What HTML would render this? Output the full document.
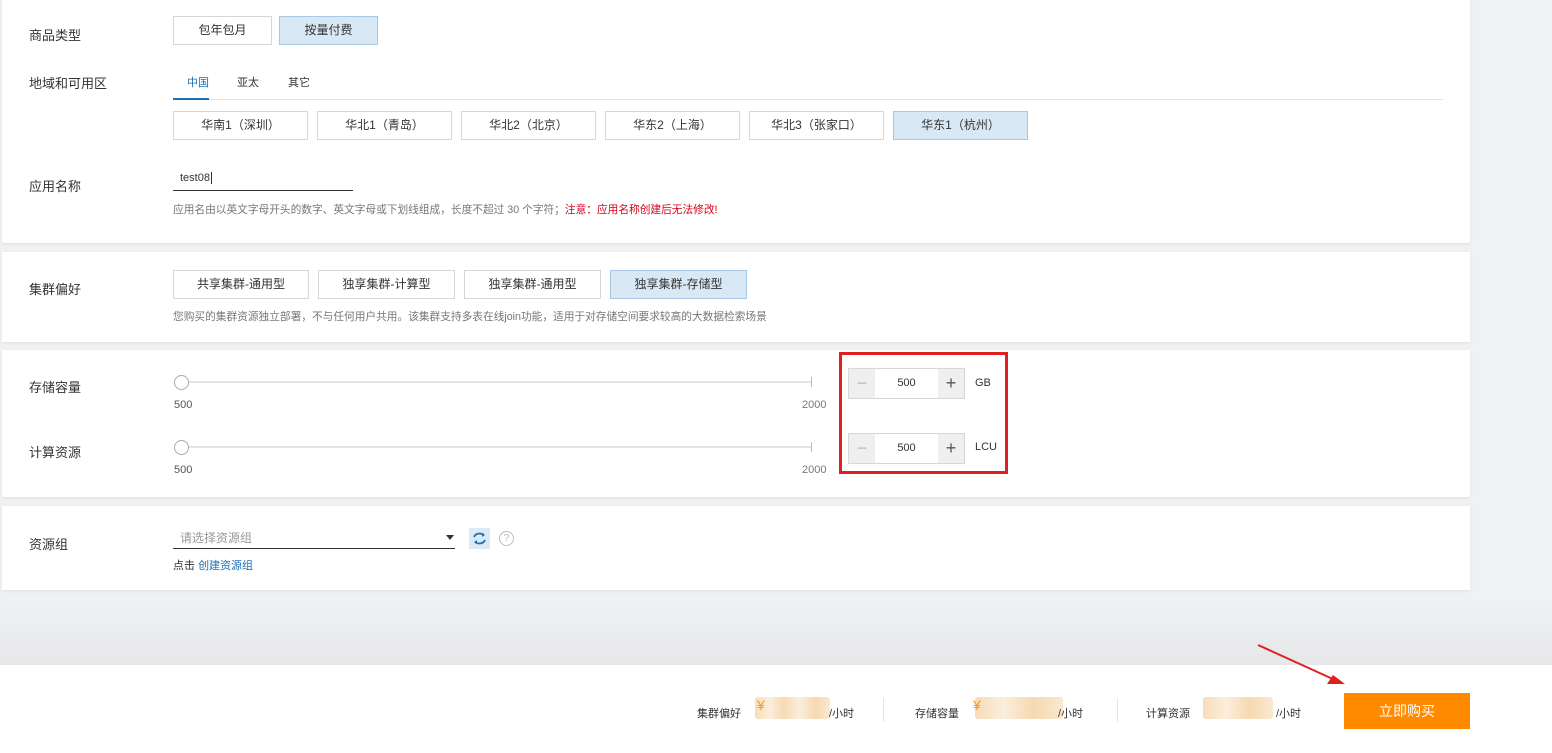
<!DOCTYPE html>
<html><head><meta charset="utf-8"><style>
*{margin:0;padding:0;box-sizing:border-box}
body{width:1552px;height:753px;background:#f0f1f3;font-family:"Liberation Sans","Noto Sans CJK SC",sans-serif;font-size:12px;color:#333;position:relative;overflow:hidden}
.a{position:absolute}
.p{position:absolute;left:2px;width:1468px;background:#fff;box-shadow:0 1px 3px rgba(0,0,0,.08)}
.lbl{position:absolute;left:29px;font-size:13px;color:#333}
.btn{position:absolute;height:29px;border:1px solid #d7d7d7;background:#fff;text-align:center;line-height:27px;font-size:12px;color:#333}
.sel{background:#d9e8f5;border-color:#a8c8e4}
.hint{position:absolute;left:173px;font-size:10.7px;color:#777}
.num{position:absolute;left:848px;width:117px;height:31px;border:1px solid #d7d7d7;background:#fff}
.num .m,.num .pl{position:absolute;top:0;width:26px;height:29px;background:#efefef;text-align:center;line-height:28px;font-size:18px;color:#bbb}
.num .pl{right:0;color:#555}
.num .v{position:absolute;left:26px;right:26px;text-align:center;line-height:29px;font-size:11px}
.blur{position:absolute;height:22px;background:linear-gradient(90deg,#f7dcb8,#fbeedd,#f5d9b0,#fbe8d2);border-radius:3px}
</style></head><body>
<div class="p" style="top:-5px;height:248px"></div>
<div class="p" style="top:252px;height:90px"></div>
<div class="p" style="top:350px;height:147px"></div>
<div class="p" style="top:506px;height:84px"></div>
<div class="a" style="left:0;top:600px;width:1552px;height:65px;background:linear-gradient(#f0f1f3,#e6e7e9)"></div>
<div class="a" style="left:0;top:665px;width:1552px;height:88px;background:#fff"></div>

<div class="lbl" style="top:25px">商品类型</div>
<div class="btn" style="left:173px;top:16px;width:99px">包年包月</div>
<div class="btn sel" style="left:279px;top:16px;width:99px">按量付费</div>

<div class="lbl" style="top:73px">地域和可用区</div>
<div class="a" style="left:187px;top:74px;font-size:11px;color:#1f6fb5">中国</div>
<div class="a" style="left:237px;top:74px;font-size:11px">亚太</div>
<div class="a" style="left:288px;top:74px;font-size:11px">其它</div>
<div class="a" style="left:173px;top:99px;width:1270px;height:1px;background:#e5e5e5"></div>
<div class="a" style="left:173px;top:98px;width:36px;height:2px;background:#1f6fb5"></div>
<div class="btn" style="left:173px;top:111px;width:135px">华南1（深圳）</div>
<div class="btn" style="left:317px;top:111px;width:135px">华北1（青岛）</div>
<div class="btn" style="left:461px;top:111px;width:135px">华北2（北京）</div>
<div class="btn" style="left:605px;top:111px;width:135px">华东2（上海）</div>
<div class="btn" style="left:749px;top:111px;width:135px">华北3（张家口）</div>
<div class="btn sel" style="left:893px;top:111px;width:135px">华东1（杭州）</div>

<div class="lbl" style="top:176px">应用名称</div>
<div class="a" style="left:180px;top:172px;font-size:11px">test08<span style="border-left:1px solid #333;margin-left:1px"></span></div>
<div class="a" style="left:173px;top:190px;width:180px;height:1px;background:#333"></div>
<div class="hint" style="top:202px">应用名由以英文字母开头的数字、英文字母或下划线组成，长度不超过 30 个字符；<span style="color:#d9001b">注意：应用名称创建后无法修改!</span></div>

<div class="lbl" style="top:279px">集群偏好</div>
<div class="btn" style="left:173px;top:270px;width:136px">共享集群-通用型</div>
<div class="btn" style="left:318px;top:270px;width:137px">独享集群-计算型</div>
<div class="btn" style="left:464px;top:270px;width:137px">独享集群-通用型</div>
<div class="btn sel" style="left:610px;top:270px;width:137px">独享集群-存储型</div>
<div class="hint" style="top:309px">您购买的集群资源独立部署，不与任何用户共用。该集群支持多表在线join功能，适用于对存储空间要求较高的大数据检索场景</div>

<div class="lbl" style="top:377px">存储容量</div>
<div class="a" style="left:181px;top:381px;width:631px;height:2px;background:#e3e3e3"></div>
<div class="a" style="left:811px;top:377px;width:1px;height:10px;background:#bbb"></div>
<div class="a" style="left:174px;top:375px;width:15px;height:15px;border-radius:50%;border:1px solid #aaa;background:#fff"></div>
<div class="a" style="left:174px;top:399px;font-size:11px;color:#555">500</div>
<div class="a" style="left:802px;top:399px;font-size:11px;color:#777">2000</div>
<div class="num" style="top:368px"><div class="m">−</div><div class="v">500</div><div class="pl">+</div></div>
<div class="a" style="left:975px;top:377px;font-size:11px">GB</div>

<div class="lbl" style="top:442px">计算资源</div>
<div class="a" style="left:181px;top:446px;width:631px;height:2px;background:#e3e3e3"></div>
<div class="a" style="left:811px;top:442px;width:1px;height:10px;background:#bbb"></div>
<div class="a" style="left:174px;top:440px;width:15px;height:15px;border-radius:50%;border:1px solid #aaa;background:#fff"></div>
<div class="a" style="left:174px;top:464px;font-size:11px;color:#555">500</div>
<div class="a" style="left:802px;top:464px;font-size:11px;color:#777">2000</div>
<div class="num" style="top:433px"><div class="m">−</div><div class="v">500</div><div class="pl">+</div></div>
<div class="a" style="left:975px;top:441px;font-size:11px">LCU</div>
<div class="a" style="left:839px;top:352px;width:169px;height:122px;border:3px solid #e02020"></div>

<div class="lbl" style="top:534px">资源组</div>
<div class="a" style="left:180px;top:529px;font-size:12px;color:#999">请选择资源组</div>
<div class="a" style="left:446px;top:535px;width:0;height:0;border-left:4px solid transparent;border-right:4px solid transparent;border-top:5px solid #333"></div>
<div class="a" style="left:173px;top:548px;width:282px;height:1px;background:#333"></div>
<div class="a" style="left:469px;top:528px;width:21px;height:21px;background:#dde9f6"><svg width="21" height="21" viewBox="0 0 21 21"><path d="M5 9a6 5 0 0 1 10-2M16 12a6 5 0 0 1-10 2" stroke="#1f6fb5" stroke-width="1.8" fill="none"/><path d="M13 5l3 2-3 2zM8 16l-3-2 3-2z" fill="#1f6fb5"/></svg></div>
<div class="a" style="left:499px;top:531px;width:15px;height:15px;border-radius:50%;border:1px solid #bbb;color:#bbb;font-size:10px;text-align:center;line-height:13px">?</div>
<div class="a" style="left:173px;top:557px;font-size:11px">点击 <span style="color:#1f6fb5">创建资源组</span></div>

<div class="a" style="left:697px;top:705px;font-size:11px">集群偏好</div>
<div class="blur" style="left:755px;top:697px;width:45px"></div>
<div class="blur" style="left:785px;top:697px;width:45px"></div>
<div class="a" style="left:757px;top:697px;color:#f59a23;font-size:14px">¥</div>
<div class="a" style="left:829px;top:705px;font-size:11px">/小时</div>
<div class="a" style="left:883px;top:698px;width:1px;height:24px;background:#e5e5e5"></div>
<div class="a" style="left:915px;top:705px;font-size:11px">存储容量</div>
<div class="blur" style="left:975px;top:697px;width:88px"></div>
<div class="a" style="left:973px;top:697px;color:#f59a23;font-size:14px">¥</div>
<div class="a" style="left:1058px;top:705px;font-size:11px">/小时</div>
<div class="a" style="left:1117px;top:698px;width:1px;height:24px;background:#e5e5e5"></div>
<div class="a" style="left:1146px;top:705px;font-size:11px">计算资源</div>
<div class="blur" style="left:1203px;top:697px;width:70px"></div>
<div class="a" style="left:1276px;top:705px;font-size:11px">/小时</div>
<div class="a" style="left:1344px;top:693px;width:126px;height:36px;background:#ff8a00;color:#fff;text-align:center;line-height:36px;font-size:14px">立即购买</div>
<svg class="a" style="left:1250px;top:640px" width="100" height="50"><line x1="8" y1="5" x2="85" y2="40" stroke="#e02020" stroke-width="2"/><path d="M95 44L77 44L83 35Z" fill="#e02020"/></svg>
</body></html>
